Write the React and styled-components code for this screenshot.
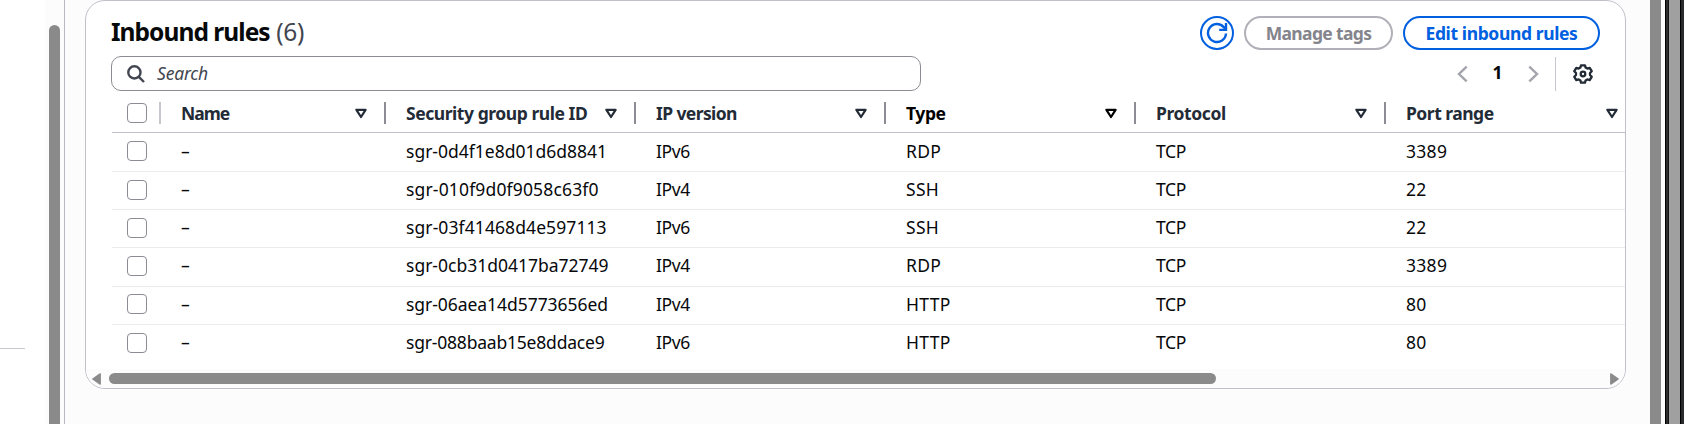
import React from "react";
import styled, { createGlobalStyle } from "styled-components";

const Global = createGlobalStyle`
  *, *::before, *::after { box-sizing: border-box; }
  body { margin: 0; background: #fcfcfc; overflow: hidden; }
  body, button, input { font-family: "Noto Sans", "Open Sans", sans-serif; }
`;

const Page = styled.div`
  display: flex;
  width: 1684px;
  height: 424px;
  overflow: hidden;
  background: #fcfcfc;
  font-size: 17.5px;
  line-height: 25px;
  color: #06080a;
`;

const SidePanel = styled.aside`
  width: 45px;
  background: #fff;
  padding-top: 348px;
`;

const SideDivider = styled.div`
  width: 25px;
  height: 1px;
  background: #c6c6cd;
`;

const SideTrack = styled.div`
  width: 20px;
  padding: 25px 0 0 4px;
  border-right: 1px solid #b9b9c3;
  background: #fcfcfc;
`;

const SideThumb = styled.div`
  width: 11px;
  height: 420px;
  border-radius: 6px 6px 0 0;
  background: #8a8a8a;
`;

const Main = styled.main`
  width: 1585px;
  padding-left: 20px;
`;

const Card = styled.section`
  display: flex;
  flex-direction: column;
  width: 1541px;
  height: 389px;
  border: 1px solid #c0c0ca;
  border-radius: 20px;
  background: #fff;
  overflow: hidden;
`;

const Header = styled.header`
  display: flex;
  justify-content: space-between;
  height: 55px;
  padding: 15px 25px 0 25px;
`;

const Title = styled.h2`
  margin: 0;
  font-size: 24.5px;
  line-height: 32px;
  font-weight: 700;
  letter-spacing: -0.95px;
  white-space: nowrap;
`;

const Counter = styled.span`
  margin-left: 1px;
  font-weight: 400;
  letter-spacing: -0.3px;
  color: #424650;
`;

const Actions = styled.div`
  display: flex;
  gap: 10px;
`;

const Button = styled.button`
  display: flex;
  align-items: center;
  justify-content: center;
  width: ${(p) => p.$width}px;
  height: 34px;
  padding: 0;
  border: 2px solid ${(p) => (p.$muted ? "#b0b0b8" : "#0060df")};
  border-radius: 17px;
  background: #fff;
  color: ${(p) => (p.$muted ? "#84848c" : "#0060df")};
  font-size: 17.5px;
  font-weight: 700;
  letter-spacing: ${(p) => p.$tracking || 0}px;
  white-space: nowrap;
`;

const Tools = styled.div`
  display: flex;
  justify-content: space-between;
  height: 35px;
  padding: 0 32px 0 25px;
`;

const SearchBox = styled.label`
  display: flex;
  align-items: center;
  gap: 12px;
  width: 810px;
  height: 35px;
  padding-left: 15px;
  border: 1px solid #8c8c94;
  border-radius: 10px;
`;

const SearchInput = styled.input`
  flex: 1;
  padding: 0 0 2px;
  border: 0;
  outline: 0;
  background: transparent;
  font-size: 17.5px;
  letter-spacing: -0.2px;
  &::placeholder { color: #424650; font-style: italic; opacity: 1; }
`;

const Pager = styled.div`
  display: flex;
  align-items: center;
  height: 35px;
`;

const PageNumber = styled.span`
  width: 60px;
  padding: 0 1px 2px 0;
  text-align: center;
  font-weight: 700;
`;

const Rule = styled.div`
  width: 1px;
  height: 34px;
  margin: 0 17px 0 16px;
  background: #c6c6cd;
`;

const Grid = styled.div`
  display: flex;
  flex-direction: column;
  height: 278px;
  padding-left: 26px;
`;

const HeadRow = styled.div`
  display: flex;
  align-items: center;
  height: 42px;
  padding-top: 3px;
  border-bottom: 1px solid #c0c0c8;
  font-weight: 700;
`;

const Row = styled.div`
  display: flex;
  align-items: flex-start;
  height: ${(p) => p.$height}px;
  padding-top: ${(p) => p.$top}px;
  border-bottom: 1px solid ${(p) => (p.$last ? "transparent" : "#ebebf0")};
  line-height: ${(p) => p.$line}px;
`;

const CheckCell = styled.div`
  display: flex;
  flex: none;
  align-items: center;
  justify-content: space-between;
  width: 49px;
  padding-left: 15px;
`;

const Checkbox = styled.span`
  width: 20px;
  height: 20px;
  border: 1.5px solid #8c8c94;
  border-radius: 4px;
  background: #fff;
`;

const Separator = styled.i`
  width: 2px;
  height: 22px;
  background: ${(p) => (p.$light ? "#c6c6cd" : "#8c8c94")};
`;

const HeadCell = styled.div`
  display: flex;
  flex: none;
  align-items: center;
  width: ${(p) => p.$width}px;
  padding-left: 20px;
  color: ${(p) => (p.$active ? "#000" : "#232b37")};
  white-space: nowrap;
`;

const HeadLabel = styled.span`
  flex: 1;
  padding-top: 1px;
  letter-spacing: ${(p) => p.$tracking}px;
`;

const SortSlot = styled.span`
  display: flex;
  width: 12px;
  padding-top: 1px;
  margin-right: 17px;
`;

const Cell = styled.div`
  flex: none;
  width: ${(p) => p.$width}px;
  padding: 0 0 0 20px;
  letter-spacing: ${(p) => p.$tracking}px;
  white-space: nowrap;
`;

const ScrollBar = styled.div`
  display: flex;
  align-items: flex-start;
  height: 19px;
  padding: 4px 6px 0;
  background: #fcfcfc;
`;

const ScrollThumb = styled.div`
  width: 1107px;
  height: 11px;
  margin: 0 auto 0 8px;
  border-radius: 6px;
  background: #8a8a8a;
`;

const Edge = styled.div`
  display: flex;
  width: 34px;
`;

const Strip = styled.div`
  width: ${(p) => p.$width}px;
  background: ${(p) => p.$color};
`;

const RefreshIcon = () => (
  <svg width="22" height="22" viewBox="0 0 22 22" fill="none" stroke="currentColor" strokeWidth="2.4">
    <path d="M20 11.5a9 9 0 1 1-2.2-6.4L19.5 7" />
    <path d="M20 1v6.9h-6.8" />
  </svg>
);

const SearchIcon = () => (
  <svg width="18" height="18" viewBox="0 0 18 18" fill="none" stroke="#424650" strokeWidth="2.4">
    <circle cx="7.4" cy="7.4" r="6.1" />
    <path d="M11.8 11.8l5.2 5.2" />
  </svg>
);

const Chevron = ({ flip }) => (
  <svg width="11" height="18" viewBox="0 0 11 18" fill="none" stroke="#a4a4ad" strokeWidth="2.4">
    <path d={flip ? "M1.3 1.6L9 9l-7.7 7.4" : "M9.7 1.6L2 9l7.7 7.4"} />
  </svg>
);

const GearIcon = () => (
  <svg width="20" height="20" viewBox="0 0 20 20" fill="none" stroke="#232b37" strokeWidth="2.3" strokeLinejoin="round">
    <path d="M8 1.3h4l.6 2.3 1.7 1 2.4-.7 2 3.3L17 9v2l1.7 1.8-2 3.3-2.4-.7-1.7 1-.6 2.3H8l-.6-2.3-1.7-1-2.4.7-2-3.3L3 11V9L1.3 7.2l2-3.3 2.4.7 1.7-1z" />
    <circle cx="10" cy="10" r="2.3" />
  </svg>
);

const SortIcon = () => (
  <svg width="12" height="11" viewBox="0 0 12 11" fill="none" stroke="currentColor" strokeWidth="2.2" strokeLinejoin="round">
    <path d="M1.4 1.8h9.2L6 9z" />
  </svg>
);

const ScrollArrow = ({ flip }) => (
  <svg width="9" height="12" viewBox="0 0 9 12" fill="#8a8a8a" stroke="#8a8a8a" strokeWidth="1.4" strokeLinejoin="round">
    <path d={flip ? "M.8.9v10.2L8.2 6z" : "M8.2.9v10.2L.8 6z"} />
  </svg>
);

const columns = [
  { label: "Name", width: 225, tracking: -1, cell: 0 },
  { label: "Security group rule ID", width: 250, tracking: -0.45 },
  { label: "IP version", width: 250, tracking: -0.6, cell: -0.4 },
  { label: "Type", width: 250, tracking: -0.4, cell: 0.3, active: true },
  { label: "Protocol", width: 250, tracking: -0.4, cell: -0.4 },
  { label: "Port range", width: 249, tracking: -0.5, cell: 0.3 },
];

const rules = [
  { height: 39, top: 8, line: 20, idTracking: 0, values: ["–", "sgr-0d4f1e8d01d6d8841", "IPv6", "RDP", "TCP", "3389"] },
  { height: 38, top: 8, line: 18, idTracking: 0.16, values: ["–", "sgr-010f9d0f9058c63f0", "IPv4", "SSH", "TCP", "22"] },
  { height: 38, top: 8, line: 18, idTracking: 0.09, values: ["–", "sgr-03f41468d4e597113", "IPv6", "SSH", "TCP", "22"] },
  { height: 39, top: 8, line: 18, idTracking: 0, values: ["–", "sgr-0cb31d0417ba72749", "IPv4", "RDP", "TCP", "3389"] },
  { height: 38, top: 7, line: 20, idTracking: -0.05, values: ["–", "sgr-06aea14d5773656ed", "IPv4", "HTTP", "TCP", "80"] },
  { height: 38, top: 8, line: 18, idTracking: -0.2, values: ["–", "sgr-088baab15e8ddace9", "IPv6", "HTTP", "TCP", "80"] },
];

export default function App() {
  return (
    <Page>
      <Global />
      <SidePanel>
        <SideDivider />
      </SidePanel>
      <SideTrack>
        <SideThumb />
      </SideTrack>
      <Main>
        <Card>
          <Header>
            <Title>
              Inbound rules <Counter>(6)</Counter>
            </Title>
            <Actions>
              <Button $width={34} aria-label="Refresh">
                <RefreshIcon />
              </Button>
              <Button $width={149} $muted $tracking={-0.65}>Manage tags</Button>
              <Button $width={197} $tracking={-0.38}>Edit inbound rules</Button>
            </Actions>
          </Header>
          <Tools>
            <SearchBox>
              <SearchIcon />
              <SearchInput placeholder="Search" />
            </SearchBox>
            <Pager>
              <Chevron />
              <PageNumber>1</PageNumber>
              <Chevron flip />
              <Rule />
              <GearIcon />
            </Pager>
          </Tools>
          <Grid>
            <HeadRow>
              <CheckCell>
                <Checkbox />
                <Separator $light />
              </CheckCell>
              {columns.map((c, i) => (
                <HeadCell key={c.label} $width={c.width} $active={c.active}>
                  <HeadLabel $tracking={c.tracking}>{c.label}</HeadLabel>
                  <SortSlot>
                    <SortIcon />
                  </SortSlot>
                  {i < columns.length - 1 && <Separator />}
                </HeadCell>
              ))}
            </HeadRow>
            {rules.map((rule, r) => (
              <Row
                key={rule.values[1]}
                $height={rule.height}
                $top={rule.top}
                $line={rule.line}
                $last={r === rules.length - 1}
              >
                <CheckCell>
                  <Checkbox />
                </CheckCell>
                {rule.values.map((value, i) => (
                  <Cell
                    key={columns[i].label}
                    $width={columns[i].width}
                    $tracking={columns[i].cell ?? rule.idTracking}
                  >
                    {value}
                  </Cell>
                ))}
              </Row>
            ))}
          </Grid>
          <ScrollBar>
            <ScrollArrow />
            <ScrollThumb />
            <ScrollArrow flip />
          </ScrollBar>
        </Card>
      </Main>
      <Edge>
        <Strip $width={11} $color="#8a8a8a" />
        <Strip $width={4} $color="#fcfcfc" />
        <Strip $width={1} $color="#000" />
        <Strip $width={2} $color="#2b2b2b" />
        <Strip $width={1} $color="#111" />
        <Strip $width={11} $color="#a0a0a0" />
        <Strip $width={1} $color="#000" />
        <Strip $width={3} $color="#282a2b" />
      </Edge>
    </Page>
  );
}
